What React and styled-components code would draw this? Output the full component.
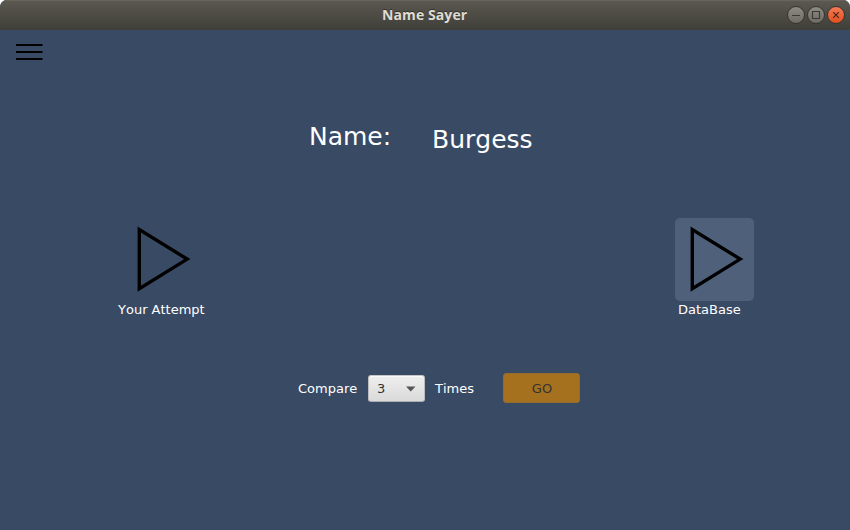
import React from "react";
import styled, { createGlobalStyle } from "styled-components";

const GlobalStyle = createGlobalStyle`
  * { box-sizing: border-box; }
  body { margin: 0; background: #fff; }
`;

const Window = styled.div`
  width: 850px;
  height: 530px;
  display: flex;
  flex-direction: column;
  overflow: hidden;
  border-radius: 7px 7px 0 0;
  background: #394a65;
  color: #fff;
  font: 13px/16px "DejaVu Sans", sans-serif;
  font-kerning: none;
`;

const TitleBar = styled.header`
  height: 30px;
  flex: none;
  display: grid;
  grid-template-columns: 1fr auto 1fr;
  align-items: center;
  padding: 0 5px;
  background: linear-gradient(#5b5950, #3f3e39);
  box-shadow: inset 0 1px #66645b;
`;

const Title = styled.h1`
  grid-column: 2;
  margin: 0;
  width: 86px;
  white-space: nowrap;
  color: #dfdbd2;
  font: bold 14px/20px "Open Sans", sans-serif;
  letter-spacing: 0.1px;
  text-shadow: 0 -1px #33322e;
`;

const WindowControls = styled.div`
  display: flex;
  justify-content: flex-end;
  gap: 2px;
`;

const ControlButton = styled.button`
  width: 18px;
  height: 18px;
  padding: 0;
  border: 1px solid #35342f;
  border-radius: 50%;
  background: ${(p) =>
    p.$close ? "linear-gradient(#f47b54, #e0501f)" : "linear-gradient(#8d8b83, #6d6b64)"};
  color: ${(p) => (p.$close ? "#4d2314" : "#3a3934")};
  svg { display: block; }
`;

const Content = styled.main`
  flex: 1;
  display: flex;
  flex-direction: column;
`;

const MenuButton = styled.button`
  width: 28px;
  height: 18px;
  margin: 13px 0 0 16px;
  padding: 0;
  border: 0;
  background: none;
  svg { display: block; }
`;

const NameRow = styled.section`
  display: flex;
  height: 40px;
  margin: 60px 0 0 309px;
`;

const NameText = styled.span`
  width: ${(p) => p.$width}px;
  padding-top: ${(p) => p.$drop}px;
  font-size: 25px;
  line-height: 32px;
  white-space: nowrap;
`;

const Players = styled.section`
  display: flex;
  justify-content: space-between;
  height: 101px;
  margin: 57px 96px 0 118px;
`;

const Player = styled.div`
  display: flex;
  flex-direction: column;
  width: ${(p) => p.$width}px;
`;

const PlayButton = styled.button`
  width: 79px;
  height: 83px;
  margin-left: ${(p) => p.$indent}px;
  padding: 0;
  border: 0;
  border-radius: 5px;
  background: ${(p) => (p.$active ? "#4f607b" : "none")};
  svg { display: block; }
`;

const Caption = styled.span`
  padding: 1px 0 0 ${(p) => p.$indent}px;
  white-space: nowrap;
`;

const CompareRow = styled.section`
  display: flex;
  align-items: center;
  height: 30px;
  margin: 54px 0 0 298px;
`;

const Label = styled.span`
  width: ${(p) => p.$width}px;
  padding-top: 1px;
`;

const Dropdown = styled.button`
  display: flex;
  align-items: center;
  justify-content: space-between;
  width: 57px;
  height: 27px;
  margin: 1px 10px 0 0;
  padding: 0 8px;
  border: 1px solid;
  border-color: #c6c6c6 #bdbdbd #acaeb2;
  border-radius: 3px;
  background: linear-gradient(#eeeeee, #dadada);
  box-shadow: inset 0 1px #fafafa;
  color: #333;
  font: inherit;
`;

const GoButton = styled.button`
  width: 77px;
  height: 30px;
  margin: 0;
  padding: 1px 0 0 1px;
  border: 1px solid #946b2c;
  border-radius: 3px;
  background: #a5711f;
  color: #333;
  font: inherit;
`;

const PlayIcon = () => (
  <svg width="79" height="83" viewBox="0 0 79 83" fill="none" stroke="#000" strokeWidth="3.4">
    <path d="M17.3 11.6V70.6L65.2 41.1Z" strokeMiterlimit="10" />
  </svg>
);

const ControlIcon = ({ d }) => (
  <svg width="16" height="16" viewBox="0 0 16 16" fill="none" stroke="currentColor" strokeWidth="1.2">
    <path d={d} />
  </svg>
);

export default function App() {
  return (
    <>
      <GlobalStyle />
      <Window>
        <TitleBar>
          <span />
          <Title>Name Sayer</Title>
          <WindowControls>
            <ControlButton aria-label="Minimize"><ControlIcon d="M4 8.5H12" /></ControlButton>
            <ControlButton aria-label="Maximize"><ControlIcon d="M4.5 4.5H11.5V11.5H4.5Z" /></ControlButton>
            <ControlButton $close aria-label="Close"><ControlIcon d="M5.2 5.2L10.8 10.8M10.8 5.2L5.2 10.8" /></ControlButton>
          </WindowControls>
        </TitleBar>
        <Content>
          <MenuButton aria-label="Menu">
            <svg width="28" height="18" viewBox="0 0 28 18">
              <path d="M0 1H26.5V3H0ZM0 8H26.5V10H0ZM0 15H26.5V17H0Z" />
            </svg>
          </MenuButton>
          <NameRow>
            <NameText $width={123} $drop={0}>Name:</NameText>
            <NameText $width={106} $drop={3}>Burgess</NameText>
          </NameRow>
          <Players>
            <Player $width={90}>
              <PlayButton $indent={4} aria-label="Play your attempt"><PlayIcon /></PlayButton>
              <Caption $indent={0}>Your Attempt</Caption>
            </Player>
            <Player $width={79}>
              <PlayButton $indent={0} $active aria-label="Play database"><PlayIcon /></PlayButton>
              <Caption $indent={3}>DataBase</Caption>
            </Player>
          </Players>
          <CompareRow>
            <Label $width={70}>Compare</Label>
            <Dropdown>
              3
              <svg width="10" height="6" viewBox="0 0 10 6" fill="#555"><path d="M0 .5H9.5L4.75 5.5Z" /></svg>
            </Dropdown>
            <Label $width={68}>Times</Label>
            <GoButton>GO</GoButton>
          </CompareRow>
        </Content>
      </Window>
    </>
  );
}
